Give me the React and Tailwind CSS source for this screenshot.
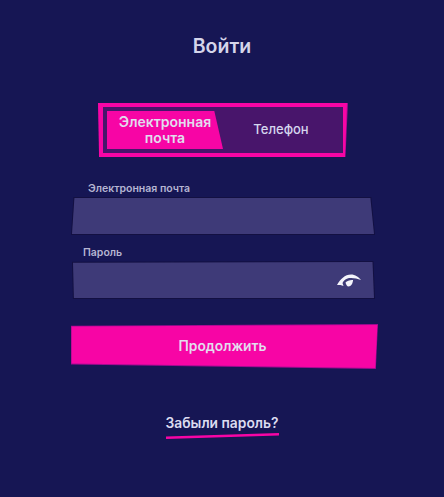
export default function App() {
  return (
    <div className="w-[444px] h-[497px] bg-[#161654] flex flex-col font-['Inter','Noto_Sans',sans-serif] overflow-hidden">
      <h1 className="mt-[35px] text-center text-[19.5px] leading-[22px] font-semibold text-[#d5d5ea]">Войти</h1>

      {/* tabs */}
      <div className="mt-[46px] ml-[98px] w-[250px] h-[54px] bg-[#a00b90] [clip-path:polygon(0_0,100%_0,99%_100%,0.4%_100%)]">
        <div className="w-full h-full bg-[#f705a5] pt-[4px] pb-[4px] pl-[5px] pr-[5px] [clip-path:polygon(0_0,99.6%_0,98.8%_100%,0.4%_100%)]">
          <div className="w-full h-full bg-[#48156b] p-[4px] flex">
            <div className="w-[116px] shrink-0 h-full bg-[#f705a5] flex items-center justify-center text-center text-[14px] leading-[16px] font-semibold text-[#e2dcee] [clip-path:polygon(0_0,92.5%_0,100%_100%,0_100%)]">
              Электронная почта
            </div>
            <div className="flex-1 flex items-center justify-center text-[13px] font-medium text-[#d5d5ee]">Телефон</div>
          </div>
        </div>
      </div>

      {/* fields */}
      <div className="mt-[25px] ml-[71px] w-[304px] flex flex-col">
        <label className="ml-[17px] text-[10.5px] leading-[14px] font-semibold text-[#b5b5d2]">Электронная почта</label>
        <div className="mt-[1px] w-[304px] h-[38px] bg-[#131042] p-[1px] [clip-path:polygon(0.800%_0,98.800%_0,100%_100%,0_100%)]">
          <div className="w-full h-full bg-[#3e3a78] [clip-path:polygon(0.800%_0,98.800%_0,100%_100%,0_100%)]" />
        </div>

        <label className="mt-[11px] ml-[12px] text-[10.5px] leading-[14px] font-semibold text-[#b5b5d2]">Пароль</label>
        <div className="mt-[1px] ml-[1px] w-[303px] h-[38px] bg-[#131042] p-[1px] [clip-path:polygon(0_2%,99.500%_0,100%_100%,0.300%_100%)]">
          <div className="w-full h-full bg-[#3e3a78] flex items-center justify-end pr-[13px] [clip-path:polygon(0_2%,99.500%_0,100%_100%,0.300%_100%)]">
            <svg viewBox="0 0 24 14" className="w-[24px] h-[14px] mt-[1px]" fill="#f4f4fb">
              <path d="M0 11C3 5.500 8 .5 14 .5C18 .5 22 3 24 6C20 4.300 16 3.600 12 4C9 4.500 6.500 6.500 5.500 9L6.500 12L3.500 11Z" />
              <path d="M8.500 8.500C10 6.800 13.500 5.600 16 6C16 9 14 12.500 11.500 12.500C10 12.500 9 10.500 8.500 8.500Z" />
            </svg>
          </div>
        </div>
      </div>

      {/* button */}
      <div className="mt-[25px] ml-[71px] w-[307px] h-[45px] bg-[#a00b90] [clip-path:polygon(0_3.800%,100%_0,99.300%_100%,0_90%)]">
        <button className="w-full h-full pb-[1px] pr-[4px] bg-[#f705a5] flex items-center justify-center text-[13.800px] font-semibold text-[#e4dcee] [clip-path:polygon(0.200%_5.800%,99.800%_2%,99.100%_98%,0.200%_88%)]">
          Продолжить
        </button>
      </div>

      {/* forgot */}
      <a className="mt-[44px] self-center text-[13.800px] leading-[20px] font-semibold text-[#dcdcf0]">Забыли пароль?</a>
      <svg viewBox="0 0 113 6" className="w-[113px] h-[6px] ml-[166px]">
        <polygon points="0,3.500 113,0 113,2.500 0,6" fill="#f705a5" />
      </svg>
    </div>
  );
}
